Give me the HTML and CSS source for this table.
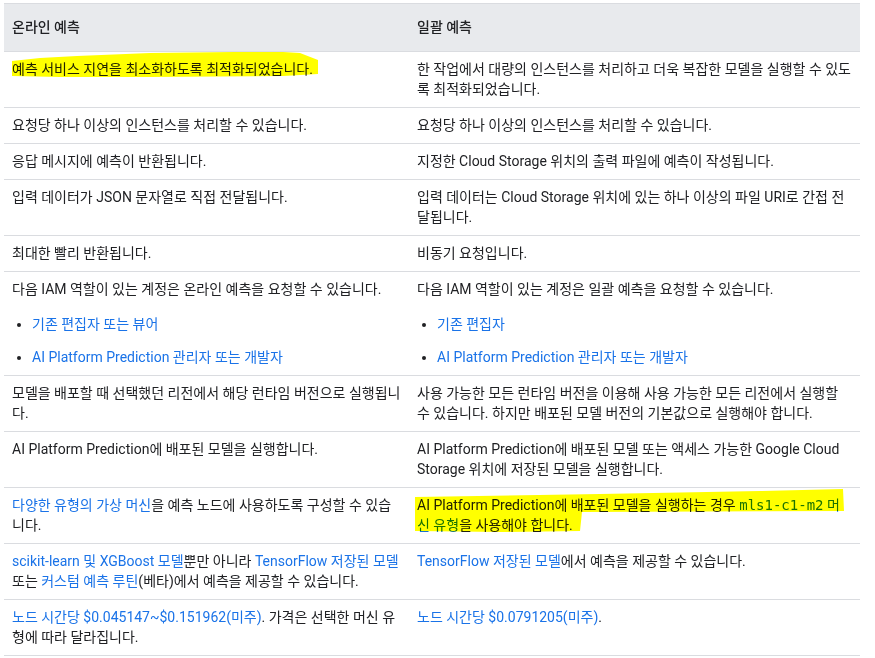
FILE: index.html
```html
<!DOCTYPE html>
<html lang="ko">
<head>
<meta charset="utf-8">
<title>온라인 예측과 일괄 예측 비교</title>
<link rel="stylesheet" href="styles.css">
</head>
<body>
<div class="page">
<table class="cmp">
<colgroup><col class="c1"><col class="c2"></colgroup>
<thead>
<tr><th>온라인 예측</th><th>일괄 예측</th></tr>
</thead>
<tbody>
<tr>
<td class="mark-cell"><svg class="hl" width="405" height="56"><polygon points="8,9 36,6 73,4 146,1 229,0 279,0 296,1 314,8 314,22 279,24 146,25 56,25 8,24"/></svg>예측 서비스 지연을 최소화하도록 최적화되었습니다.</td>
<td>한 작업에서 대량의 인스턴스를 처리하고 더욱 복잡한 모델을 실행할 수 있도<br>록 최적화되었습니다.</td>
</tr>
<tr>
<td>요청당 하나 이상의 인스턴스를 처리할 수 있습니다.</td>
<td>요청당 하나 이상의 인스턴스를 처리할 수 있습니다.</td>
</tr>
<tr>
<td>응답 메시지에 예측이 반환됩니다.</td>
<td>지정한 Cloud Storage 위치의 출력 파일에 예측이 작성됩니다.</td>
</tr>
<tr>
<td>입력 데이터가 JSON 문자열로 직접 전달됩니다.</td>
<td>입력 데이터는 Cloud Storage 위치에 있는 하나 이상의 파일 URI로 간접 전<br>달됩니다.</td>
</tr>
<tr>
<td>최대한 빨리 반환됩니다.</td>
<td>비동기 요청입니다.</td>
</tr>
<tr>
<td>
<p class="lead">다음 IAM 역할이 있는 계정은 온라인 예측을 요청할 수 있습니다.</p>
<ul class="roles">
<li><a href="#">기존 편집자 또는 뷰어</a></li>
<li><a href="#">AI Platform Prediction 관리자 또는 개발자</a></li>
</ul>
</td>
<td>
<p class="lead">다음 IAM 역할이 있는 계정은 일괄 예측을 요청할 수 있습니다.</p>
<ul class="roles">
<li><a href="#">기존 편집자</a></li>
<li><a href="#">AI Platform Prediction 관리자 또는 개발자</a></li>
</ul>
</td>
</tr>
<tr>
<td>모델을 배포할 때 선택했던 리전에서 해당 런타임 버전으로 실행됩니<br>다.</td>
<td>사용 가능한 모든 런타임 버전을 이용해 사용 가능한 모든 리전에서 실행할<br>수 있습니다. 하지만 배포된 모델 버전의 기본값으로 실행해야 합니다.</td>
</tr>
<tr>
<td>AI Platform Prediction에 배포된 모델을 실행합니다.</td>
<td>AI Platform Prediction에 배포된 모델 또는 액세스 가능한 Google Cloud<br>Storage 위치에 저장된 모델을 실행합니다.</td>
</tr>
<tr>
<td><a href="#">다양한 유형의 가상 머신</a>을 예측 노드에 사용하도록 구성할 수 있습<br>니다.</td>
<td class="mark-cell"><svg class="hl" width="451" height="56"><polygon points="6,9 191,6 351,3 434,1 435,23 173,24 171,43 91,44 6,43"/></svg>AI Platform Prediction에 배포된 모델을 실행하는 경우 <a href="#"><code>mls1-c1-m2</code> 머<br>신 유형</a>을 사용해야 합니다.</td>
</tr>
<tr>
<td><a href="#">scikit-learn 및 XGBoost 모델</a>뿐만 아니라 <a href="#">TensorFlow 저장된 모델</a><br>또는 <a href="#">커스텀 예측 루틴</a>(베타)에서 예측을 제공할 수 있습니다.</td>
<td><a href="#">TensorFlow 저장된 모델</a>에서 예측을 제공할 수 있습니다.</td>
</tr>
<tr>
<td><a href="#">노드 시간당 $0.045147~$0.151962(미주)</a>. 가격은 선택한 머신 유<br>형에 따라 달라집니다.</td>
<td><a href="#">노드 시간당 $0.0791205(미주)</a>.</td>
</tr>
</tbody>
</table>
</div>
</body>
</html>
```

FILE: styles.css
```css
html, body {
  margin: 0;
  background: #ffffff;
}

body {
  font-family: Roboto, "Noto Sans CJK KR", sans-serif;
  font-size: 14px;
  line-height: 20px;
  color: #202124;
}

.page {
  padding: 3px 4px;
}

.cmp {
  border-collapse: collapse;
  table-layout: fixed;
  width: 856px;
  border-top: 1px solid #dadce0;
}

.c1 { width: 405px; }
.c2 { width: 451px; }

.cmp th {
  background: #e8eaed;
  text-align: left;
  font-weight: 500;
  padding: 13px 8px 14px;
  border-bottom: 1px solid #dadce0;
  color: #202124;
  line-height: 20px;
}

.cmp td {
  padding: 7px 8px 8px;
  vertical-align: top;
  border-bottom: 1px solid #dadce0;
  white-space: nowrap;
}

a {
  color: #1a73e8;
  text-decoration: none;
}

code {
  font-family: "DejaVu Sans Mono", "Liberation Mono", monospace;
  font-size: 14px;
  line-height: 14px;
  font-weight: 500;
}

.lead {
  margin: 0 0 15px;
}

.roles {
  margin: 0;
  padding-left: 20px;
}

.roles li + li {
  margin-top: 13px;
}

.mark-cell {
  position: relative;
}

.hl {
  position: absolute;
  top: 0;
  left: 0;
  overflow: visible;
  pointer-events: none;
  mix-blend-mode: multiply;
}

.hl polygon {
  fill: #ffff00;
}
```
